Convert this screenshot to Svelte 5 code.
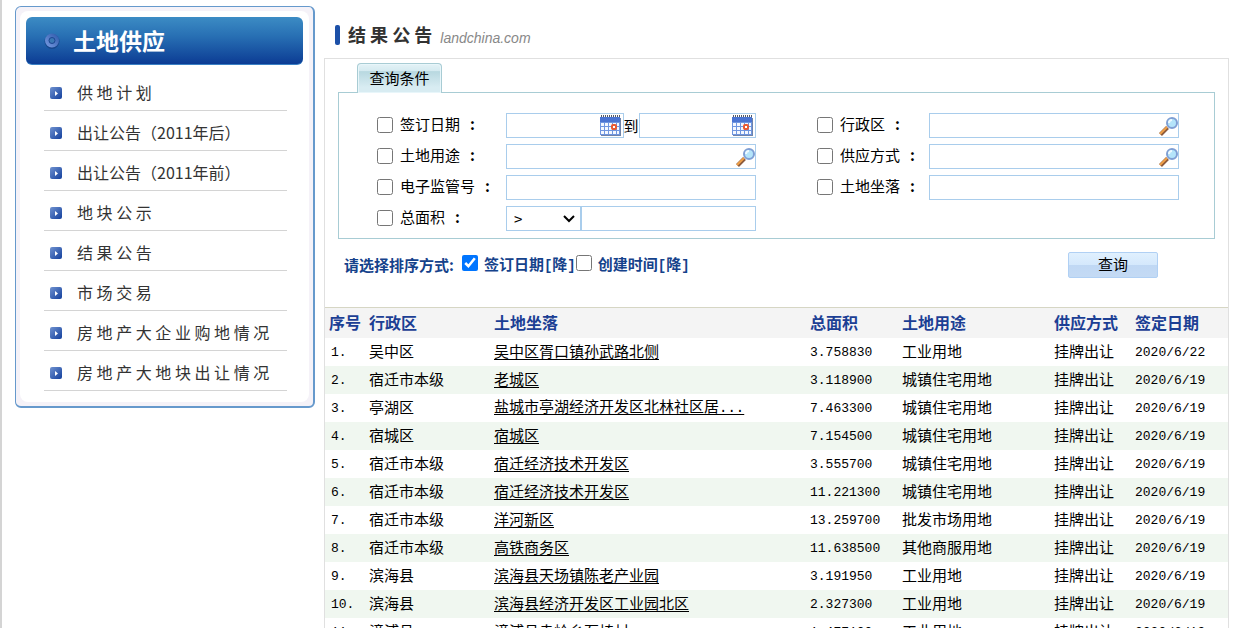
<script>
  const menu = [
    '供 地 计 划',
    '出让公告（2011年后）',
    '出让公告（2011年前）',
    '地 块 公 示',
    '结 果 公 告',
    '市 场 交 易',
    '房 地 产 大 企 业 购 地 情 况',
    '房 地 产 大 地 块 出 让 情 况'
  ];

  const headers = ['序号', '行政区', '土地坐落', '总面积', '土地用途', '供应方式', '签定日期'];

  const rows = [
    ['吴中区', '吴中区胥口镇孙武路北侧', '3.758830', '工业用地', '2020/6/22'],
    ['宿迁市本级', '老城区', '3.118900', '城镇住宅用地', '2020/6/19'],
    ['亭湖区', '盐城市亭湖经济开发区北林社区居...', '7.463300', '城镇住宅用地', '2020/6/19'],
    ['宿城区', '宿城区', '7.154500', '城镇住宅用地', '2020/6/19'],
    ['宿迁市本级', '宿迁经济技术开发区', '3.555700', '城镇住宅用地', '2020/6/19'],
    ['宿迁市本级', '宿迁经济技术开发区', '11.221300', '城镇住宅用地', '2020/6/19'],
    ['宿迁市本级', '洋河新区', '13.259700', '批发市场用地', '2020/6/19'],
    ['宿迁市本级', '高铁商务区', '11.638500', '其他商服用地', '2020/6/19'],
    ['滨海县', '滨海县天场镇陈老产业园', '3.191950', '工业用地', '2020/6/19'],
    ['滨海县', '滨海县经济开发区工业园北区', '2.327300', '工业用地', '2020/6/19'],
    ['漳浦县', '漳浦县赤岭乡石椅村', '1.477100', '工业用地', '2020/6/19']
  ];

  let byDate = $state(true);
  let byCreated = $state(false);
</script>

{#snippet calendar()}
  <svg width="22" height="22" viewBox="0 0 22 22" aria-hidden="true">
    <rect x="2" y="3" width="20" height="18" fill="#6f83a8" />
    <rect x="1" y="3" width="20" height="17" fill="#6f96e0" />
    <rect x="1" y="2" width="20" height="5" fill="#4a74d2" />
    <path d="M2 1h19" stroke="#555b66" stroke-width="2" stroke-dasharray="1 1" />
    <path d="M2 8h3v3H2zM6 8h3v3H6zM10 8h3v3h-3zM14 8h3v3h-3zM18 8h2v3h-2zM2 12h3v3H2zM6 12h3v3H6zM10 12h3v3h-3zM18 12h2v3h-2zM2 16h3v3H2zM6 16h3v3H6zM10 16h3v3h-3zM14 16h3v3h-3zM18 16h2v3h-2z" fill="#f4f8ff" />
    <rect x="13" y="10" width="4" height="4" rx="1" fill="#fff" stroke="#ea5a32" stroke-width="2" />
  </svg>
{/snippet}

{#snippet magnifier()}
  <svg width="20" height="20" viewBox="0 0 20 20" aria-hidden="true">
    <path d="M9.500 11.500L2.500 18.500" stroke="#8c5a3c" stroke-width="4" />
    <path d="M9 11L2 18" stroke="#f0a048" stroke-width="2" />
    <circle cx="14" cy="7" r="5" fill="#b4e4fa" stroke="#7f9fd4" stroke-width="2" />
    <path d="M11 7a3 3 0 0 1 3-3" stroke="#eefaff" stroke-width="2" fill="none" />
  </svg>
{/snippet}

{#snippet lookup(id, name)}
  <div class="field">
    <input {id} type="text" />
    <button type="button" class="icon lens" aria-label={name}>{@render magnifier()}</button>
  </div>
{/snippet}

{#snippet check(id, text)}
  <div class="check">
    <input type="checkbox" id={id + '-on'} />
    <label for={id + '-on'}>{text}<span class="colon">:</span></label>
  </div>
{/snippet}

<div class="page">
  <aside>
    <div class="panel">
      <h2>
        <svg width="18" height="18" viewBox="0 0 18 18" aria-hidden="true">
          <defs>
            <linearGradient id="ring" x1="1" y1="0" x2="0" y2="1">
              <stop offset="0" stop-color="#3560b0" />
              <stop offset="1" stop-color="#7094dc" />
            </linearGradient>
          </defs>
          <circle cx="9" cy="9.500" r="7.500" fill="#143a7c" opacity="0.6" />
          <circle cx="9" cy="8.500" r="5" fill="#3a78b4" stroke="url(#ring)" stroke-width="4" />
          <circle cx="9" cy="8.500" r="3" fill="none" stroke="#1c4692" stroke-width="1" />
        </svg>
        <span>土地供应</span>
      </h2>
      <ul>
        {#each menu as item}
          <li>
            <svg width="12" height="12" viewBox="0 0 12 12" aria-hidden="true">
              <defs>
                <linearGradient id="bullet" x1="0" y1="0" x2="1" y2="1">
                  <stop offset="0" stop-color="#7092d0" />
                  <stop offset="1" stop-color="#123e9c" />
                </linearGradient>
              </defs>
              <rect width="12" height="12" rx="2" fill="url(#bullet)" />
              <path d="M5 4l3 2.500L5 9z" fill="#fff" />
            </svg>
            <a href="#menu">{item}</a>
          </li>
        {/each}
      </ul>
    </div>
  </aside>

  <main>
    <header>
      <span class="bar"></span>
      <h1>结 果 公 告</h1>
      <em>landchina.com</em>
    </header>

    <div class="content">
      <form>
        <div class="tab">查询条件</div>
        <div class="conditions">
          {@render check('date', '签订日期')}
          <div class="pair">
            <div class="field">
              <input id="date" type="text" aria-label="签订日期起" />
              <button type="button" class="icon" aria-label="选择起始日期">{@render calendar()}</button>
            </div>
            <label for="date-end">到</label>
            <div class="field">
              <input id="date-end" type="text" />
              <button type="button" class="icon" aria-label="选择结束日期">{@render calendar()}</button>
            </div>
          </div>
          <div class="right">{@render check('region', '行政区')}</div>
          {@render lookup('region', '选择行政区')}

          {@render check('usage', '土地用途')}
          {@render lookup('usage', '选择土地用途')}
          <div class="right">{@render check('supply', '供应方式')}</div>
          {@render lookup('supply', '选择供应方式')}

          {@render check('number', '电子监管号')}
          <div class="field"><input type="text" aria-label="电子监管号" /></div>
          <div class="right">{@render check('place', '土地坐落')}</div>
          <div class="field"><input type="text" aria-label="土地坐落" /></div>

          {@render check('area', '总面积')}
          <div class="pair">
            <div class="choice">
              <select aria-label="比较方式">
                <option>&gt;</option>
                <option>=</option>
                <option>&lt;</option>
              </select>
              <svg width="12" height="8" viewBox="0 0 12 8" aria-hidden="true">
                <path d="M1 1l5 5 5-5" fill="none" stroke="#000" stroke-width="2" />
              </svg>
            </div>
            <div class="field"><input type="text" aria-label="总面积" /></div>
          </div>
        </div>

        <div class="sort">
          <span class="lead">请选择排序方式:</span>
          <input type="checkbox" id="by-date" bind:checked={byDate} />
          <label for="by-date">签订日期<span class="mono">[</span>降<span class="mono">]</span></label>
          <input type="checkbox" id="by-created" bind:checked={byCreated} />
          <label for="by-created">创建时间<span class="mono">[</span>降<span class="mono">]</span></label>
          <button type="button" class="query">查询</button>
        </div>
      </form>

      <table>
        <colgroup>
          <col class="c-no" /><col class="c-region" /><col /><col class="c-area" />
          <col class="c-use" /><col class="c-supply" /><col class="c-date" />
        </colgroup>
        <thead>
          <tr>
            {#each headers as h}<th scope="col">{h}</th>{/each}
          </tr>
        </thead>
        <tbody>
          {#each rows as [region, place, area, use, date], i}
            <tr>
              <td class="num">{i + 1}.</td>
              <td>{region}</td>
              <td>
                <a href="#detail">{place.replace('...', '')}{#if place.endsWith('...')}<span class="mono">...</span>{/if}</a>
              </td>
              <td class="num">{area}</td>
              <td>{use}</td>
              <td>挂牌出让</td>
              <td class="num">{date}</td>
            </tr>
          {/each}
        </tbody>
      </table>
    </div>
  </main>
</div>

<style>
  .page {
    display: flex;
    align-items: flex-start;
    gap: 9px;
    height: 100vh;
    box-sizing: border-box;
    overflow: hidden;
    padding: 6px 5px 0 13px;
    border-left: 2px solid #d4d4d4;
    background: #fff;
    color: #000;
    font: 15px/20px "Noto Sans CJK SC", sans-serif;
  }
  h1, h2, ul { margin: 0; padding: 0; }
  input, select, button { font: inherit; color: inherit; margin: 0; }
  input[type='checkbox'] { width: 16px; height: 16px; flex: none; }
  .mono { font-family: "Liberation Mono", monospace; font-size: 14px; }

  aside {
    flex: none;
    width: 300px;
    box-sizing: border-box;
    padding: 4px;
    border: 1px solid #6699cc;
    border-width: 1px 2px 2px 1px;
    border-radius: 6px;
    background: #f5f2f8;
  }
  .panel {
    padding: 6px 6px 11px;
    border-radius: 8px;
    background: #fff;
  }
  h2 {
    display: flex;
    align-items: center;
    gap: 12px;
    height: 48px;
    box-sizing: border-box;
    padding-left: 17px;
    border-bottom: 1px solid #3a80c4;
    border-radius: 6px;
    background: linear-gradient(#3c8cc4, #2870b4 40%, #0c3c94);
    color: #fff;
    font-size: 23px;
    line-height: 28px;
  }
  h2 span { padding-bottom: 2px; }
  ul { list-style: none; padding: 6px 16px 0 18px; }
  li {
    display: flex;
    align-items: center;
    gap: 15px;
    height: 40px;
    box-sizing: border-box;
    padding: 4px 0 0 6px;
    border-bottom: 1px solid #d4d4d4;
  }
  li a {
    padding-bottom: 2px;
    color: #333;
    font-size: 16px;
    text-decoration: none;
    white-space: nowrap;
  }

  main { flex: 1; min-width: 0; }
  header {
    display: flex;
    align-items: center;
    height: 52px;
    box-sizing: border-box;
    padding: 6px 0 0 11px;
  }
  .bar { width: 5px; height: 20px; border-radius: 2px; background: #1c50a8; }
  h1 { padding-bottom: 2px; margin-left: 8px; color: #333; font-size: 18px; line-height: 24px; }
  em {
    margin: 6px 0 0 8px;
    color: #888;
    font: italic 14px/20px "Liberation Sans", sans-serif;
  }

  .content { border: 1px solid #e0e0e0; border-bottom: 0; }
  form { padding: 4px 13px 0; }
  .tab {
    position: relative;
    width: 85px;
    height: 30px;
    box-sizing: border-box;
    margin: 0 0 -1px 19px;
    border: 1px solid #a8ccd4;
    border-bottom: 0;
    border-radius: 4px 4px 0 0;
    background: linear-gradient(#e4f2f6 0, #d4eaf0 25%, #b8d8e0 26%, #d8ecf2 80%);
    box-shadow: inset 0 0 0 1px #e8f6fa;
    line-height: 28px;
    text-align: center;
  }
  .conditions {
    display: grid;
    grid-template-columns: 129px 1fr 61px 112px 1fr;
    grid-auto-rows: 25px;
    row-gap: 6px;
    padding: 20px 35px 7px 38px;
    border: 1px solid #a8ccd4;
  }
  .right { grid-column: 4; }
  .check { display: flex; align-items: center; gap: 7px; height: 24px; white-space: nowrap; }
  .check label { padding-bottom: 2px; }
  .colon { margin-left: 10px; font-weight: bold; }
  .field {
    display: flex;
    align-items: center;
    flex: 1;
    min-width: 0;
    box-sizing: border-box;
    border: 1px solid #a9cdec;
    background: #fff;
  }
  .field input {
    flex: 1;
    width: 0;
    min-width: 0;
    height: 22px;
    box-sizing: border-box;
    padding: 0 4px;
    border: 0;
    background: none;
  }
  .pair { display: flex; }
  .pair label { line-height: 26px; }
  .icon { display: flex; padding: 0 2px 0 0; border: 0; background: none; }
  .lens { padding: 1px 0 0; }
  .choice { position: relative; display: flex; flex: none; width: 75px; }
  .choice svg { position: absolute; top: 9px; right: 6px; pointer-events: none; }
  select {
    appearance: none;
    width: 100%;
    padding: 0 0 0 7px;
    border: 1px solid #a9cdec;
    border-radius: 0;
    background: #fff;
  }

  .sort {
    display: flex;
    align-items: center;
    height: 68px;
    box-sizing: border-box;
    padding: 0 57px 16px 6px;
    color: #15428b;
    font-weight: bold;
    white-space: nowrap;
  }
  .lead { margin-right: 8px; }
  .sort input { margin-bottom: 4px; }
  .sort label { margin-left: 6px; }
  .query {
    width: 90px;
    height: 26px;
    margin-left: auto;
    padding: 0 0 2px;
    border: 1px solid #b0d0f4;
    border-radius: 2px;
    background: linear-gradient(#e0f0fe 0, #d4e8fc 50%, #c0d8f4 51%, #c4daf4);
    color: #000;
    font-weight: normal;
    line-height: 22px;
  }

  table {
    width: 100%;
    table-layout: fixed;
    border-collapse: collapse;
    border-top: 1px solid #d6d6c4;
  }
  .c-no { width: 40px; }
  .c-region { width: 125px; }
  .c-area { width: 92px; }
  .c-use { width: 152px; }
  .c-supply { width: 81px; }
  .c-date { width: 97px; }
  th, td { padding: 0 0 2px 4px; text-align: left; white-space: nowrap; }
  thead tr { height: 30px; background: #f4f4f4; }
  th { color: #1c3f94; font-size: 16px; }
  tbody tr { height: 28px; }
  tbody tr:nth-child(even) { background: #f0f7f0; }
  td a { color: #000; text-underline-offset: 2px; }
  .num {
    padding: 2px 0 0 4px;
    font-family: "Liberation Mono", monospace;
    font-size: 13px;
  }
  td.num:first-child { padding-left: 6px; }
</style>
